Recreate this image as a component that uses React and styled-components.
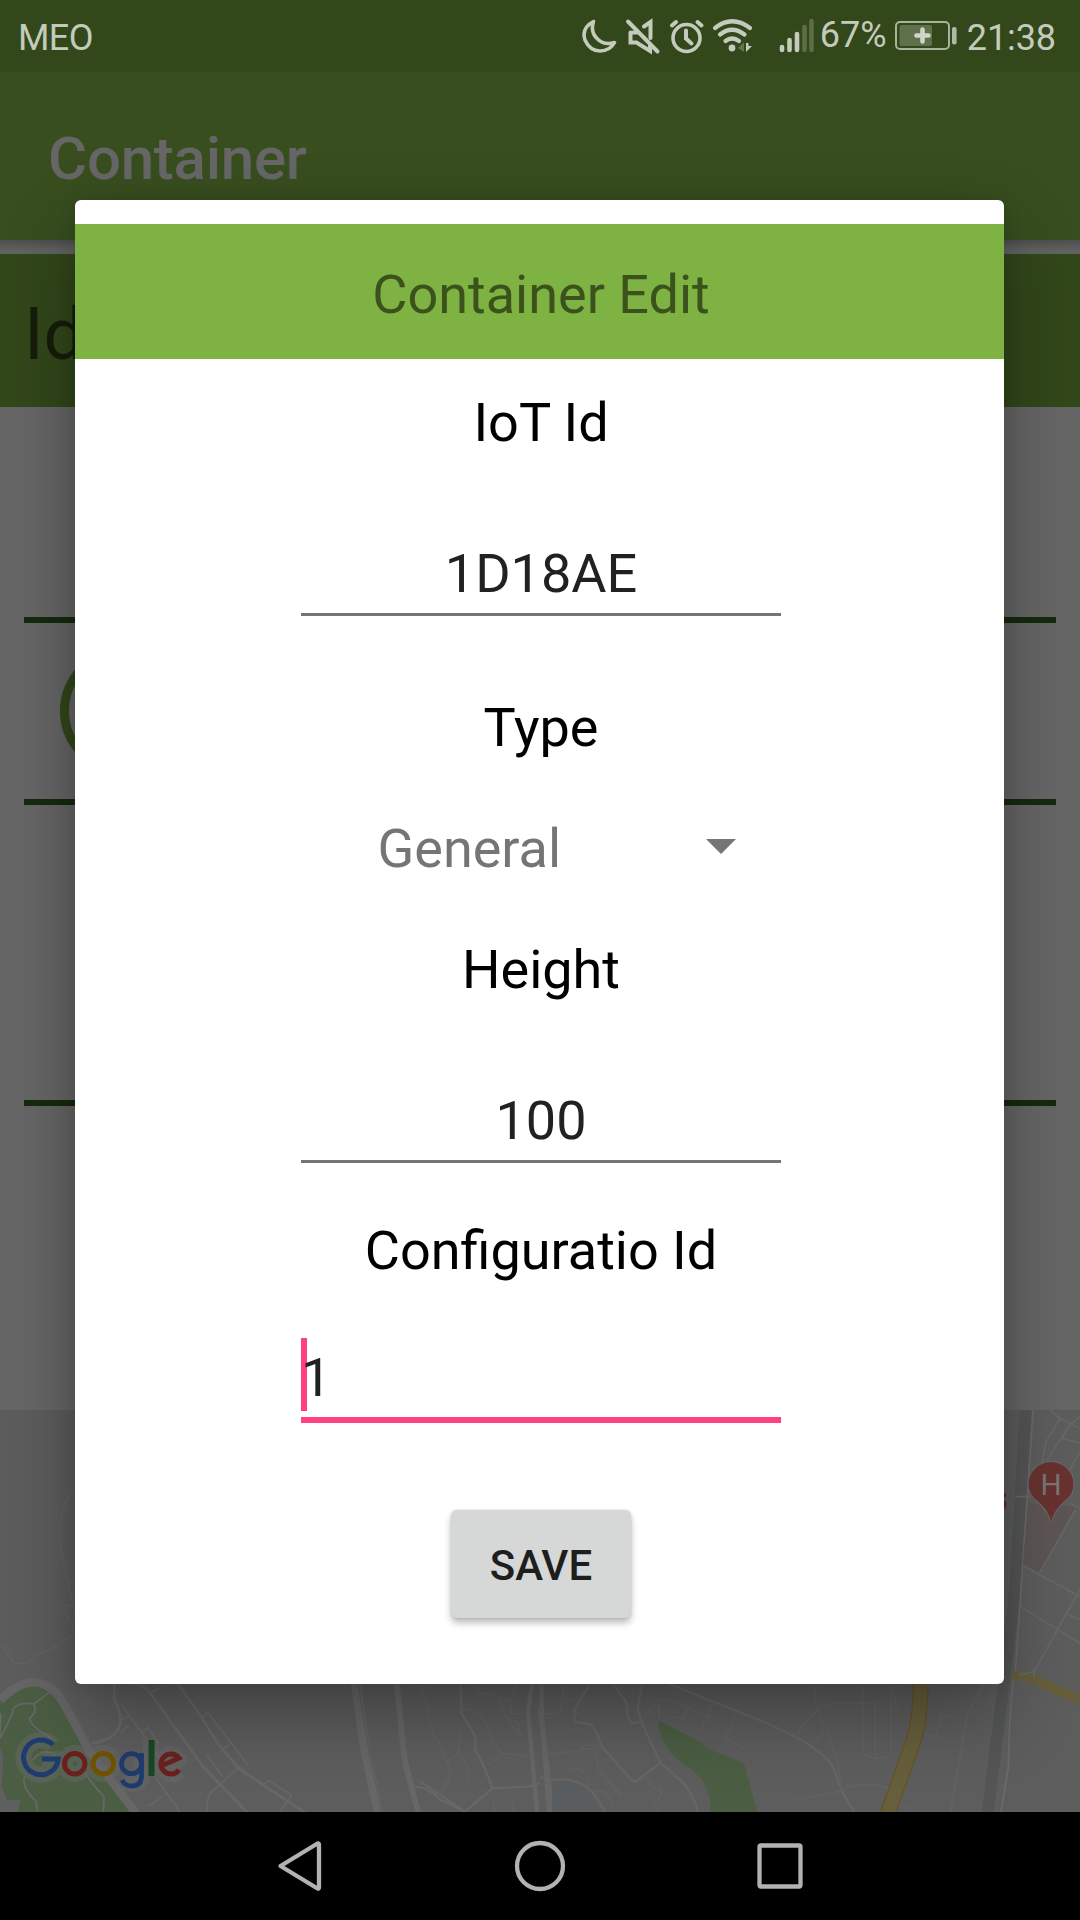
import React from "react";
import styled, { createGlobalStyle } from "styled-components";

const Global = createGlobalStyle`
  * { box-sizing: border-box; }
  html, body { margin: 0; background: #000; }
  body { font-family: Roboto, "Noto Sans", sans-serif; }
`;

const Screen = styled.div`
  position: relative;
  display: flex;
  flex-direction: column;
  width: 1080px;
  height: 1920px;
  overflow: hidden;
  background: #666;
`;

const StatusBar = styled.header`
  display: flex;
  justify-content: space-between;
  height: 72px;
  padding: 0 24px 0 18px;
  background: #32471a;
  color: #c4cbbc;
  font-size: 36px;
  line-height: 76px;
`;

const Carrier = styled.span`
  letter-spacing: -0.6px;
`;

const Clock = styled.span`
  letter-spacing: -0.1px;
`;

const StatusGroup = styled.div`
  display: flex;
`;

const Percent = styled.span`
  line-height: 71px;
  width: 67px;
  margin-right: 7px;
`;

const StatusSvg = styled.svg`
  display: block;
  flex: none;
`;

const AppBar = styled.div`
  height: 168px;
  flex: none;
  padding: 51px 48px 0;
  background: #384e1f;
  color: #666;
  font-size: 60px;
  font-weight: 500;
  letter-spacing: -0.25px;
  line-height: 72px;
`;

const AppBarShadow = styled.div`
  flex: none;
  height: 14px;
  background: linear-gradient(#4e4e4e, #616161 70%, #636363);
`;

const TitleBand = styled.div`
  flex: none;
  height: 153px;
  padding: 39px 24px 0;
  background: #32471a;
  color: #151d0b;
  font-size: 72px;
  line-height: 84px;
`;

const Details = styled.div`
  flex: none;
  display: flex;
  flex-direction: column;
  height: 1003px;
  padding: 210px 24px 0;
`;

const Rule = styled.div`
  height: 6px;
  background: #162a0e;
`;

const GaugeRow = styled.div`
  height: 176px;
  padding: 24px 36px;
`;

const Gauge = styled.div`
  width: 128px;
  height: 128px;
  border: 9px solid #32471a;
  border-radius: 50%;
`;

const Gap = styled.div`
  height: 295px;
`;

const MapArea = styled.div`
  position: relative;
  flex: none;
  height: 402px;
  background: #5d5d5d;
  svg { display: block; }
`;

const Dialog = styled.section`
  position: absolute;
  left: 75px;
  top: 200px;
  width: 929px;
  height: 1484px;
  padding-top: 24px;
  background: #fff;
  border-radius: 6px;
  box-shadow: 0 30px 72px rgba(0, 0, 0, 0.32), 0 0 18px rgba(0, 0, 0, 0.1);
  color: #000;
  font-size: 54px;
  line-height: 64px;
`;

const DialogTitle = styled.div`
  height: 135px;
  padding: 39px 0 0 3px;
  background: #7eb343;
  color: #3b521d;
  text-align: center;
`;

const Form = styled.div`
  display: flex;
  flex-direction: column;
  align-items: center;
  padding-left: 3px;
`;

const Label = styled.div`
  height: 64px;
  margin-top: ${(p) => p.$top}px;
`;

const Field = styled.div`
  display: flex;
  justify-content: ${(p) => (p.$focused ? "flex-start" : "center")};
  width: 480px;
  height: ${(p) => (p.$focused ? 85 : 74)}px;
  margin-top: ${(p) => p.$top}px;
  padding-top: ${(p) => (p.$focused ? 8 : 0)}px;
  border-bottom: ${(p) => (p.$focused ? "6px solid #ff4081" : "3px solid #757575")};
  color: #212121;
`;

const Caret = styled.span`
  width: 6px;
  height: 73px;
  margin: -8px -6px 0 0;
  background: #ff4081;
`;

const FieldText = styled.span`
  position: relative;
`;

const Spinner = styled.div`
  display: flex;
  align-items: center;
  justify-content: space-between;
  width: 358px;
  height: 64px;
  margin: 57px 0 0 31px;
  color: #757575;

  svg { margin-bottom: 6px; }
`;

const SaveButton = styled.button`
  width: 180px;
  height: 108px;
  margin-top: 87px;
  padding: 4px 0 0;
  border: 0;
  border-radius: 6px;
  background: #d6d7d7;
  box-shadow: 0 5px 7px rgba(0, 0, 0, 0.26), 0 0 3px rgba(0, 0, 0, 0.12);
  color: #1e1e1e;
  font: 500 42px/50px Roboto, sans-serif;
`;

const NavBar = styled.nav`
  display: flex;
  height: 108px;
  background: #000;
`;

function StatusIcons() {
  return (
    <StatusSvg width="240" height="72" viewBox="580 0 240 72" fill="none" stroke="#c4cbbc" strokeLinecap="round">
      <path d="M593.5 21.500Q581 28 585 40Q590 51 600 51Q610 51 614.500 42.500Q604 45.500 597.500 39Q590 32 593.500 21.500Z" strokeWidth="3.600" strokeLinejoin="round" />
      <path d="M628 21.500L657.500 51.500M630.500 32.500V42.500H636.500L650 51V44M633 32.500H638M644 26.500L650.500 22V38" strokeWidth="4" />
      <circle cx="686.500" cy="38" r="13.500" strokeWidth="3.600" />
      <path d="M686 30.500V38.500L691.500 43.500" strokeWidth="4" />
      <path d="M672 25.500L676 22M697.500 22L701.500 25.500" strokeWidth="4" />
      <path d="M715 28Q732 14.500 750 28M720 34.500Q732 25 744.500 34.500M725.500 41Q732 36 739 41" strokeWidth="4.200" />
      <circle cx="732" cy="48" r="3.400" fill="#c4cbbc" stroke="none" />
      <path d="M738 48L744 42V52Z" fill="#60734d" stroke="none" />
      <path d="M746 43V52L752 46H748.500V43Z" fill="#c4cbbc" stroke="none" />
      <path d="M782 50V47M789.500 50V40M797 50V34" strokeWidth="4.600" />
      <path d="M804.500 50V27M811.500 50V21" stroke="#5c6e48" strokeWidth="4.600" />
    </StatusSvg>
  );
}

function Battery() {
  return (
    <StatusSvg width="73" height="72" viewBox="894 0 73 72">
      <rect x="896" y="22" width="53" height="27" rx="4" fill="none" stroke="#a9b39c" strokeWidth="2" />
      <rect x="899.500" y="25" width="32.500" height="21" rx="2" fill="#5f704b" />
      <path d="M922.500 29.500V41.500M916.500 35.500H928.500" stroke="#d0d5ca" strokeWidth="4.600" strokeLinecap="round" />
      <rect x="952" y="27" width="4.600" height="17.500" rx="2" fill="#b0b9a5" />
    </StatusSvg>
  );
}

function CityMap() {
  return (
    <svg width="1080" height="402" viewBox="0 0 1080 402">
      <g transform="translate(0 -20) scale(.34438 .33333)" fill="none" stroke="#676767" strokeWidth="5">
        <path d="M0 935Q90 840 160 915Q185 945 270 1110L395 1270H0Z" fill="#4b5e43" stroke="none" />
        <path d="M0 1070L10 1100L5 1190L20 1230H60L50 1270H0Z" fill="#5f5f5f" stroke="none" />
        <path d="M0 930Q95 835 165 910Q185 935 260 1085L395 1270" stroke="#666" strokeWidth="25" />
        <path d="M0 1045Q30 990 40 955Q55 935 98 942L150 902M98 942Q110 965 85 985Q90 1010 150 1045M0 1040L2 970M72 1160Q60 1190 105 1235L110 1270M245 1145Q265 1180 302 1220L300 1270M95 1110Q120 1075 155 1090L175 1130" />
        <path d="M218 288Q150 380 185 520L218 670M203 580L220 575M218 640L185 650Q187 675 210 700V735Q150 785 105 793Q80 830 40 818Q20 790 10 773L0 771" stroke="#626262" />
        <path d="M332 880V930Q360 980 345 1015Q320 1055 265 1060M375 880Q415 880 435 908L590 1130L720 1270M515 880L585 980Q615 1035 640 1070L690 1130L770 1190L890 1270" strokeWidth="8" />
        <path d="M435 910L465 893M350 990L370 980M355 947L440 1070L510 1180M375 1005L350 1030M410 1030L430 1012L460 1060M590 980L603 968L720 1125M600 1095L647 1160M640 1085L665 1065M720 1160L690 1135L610 1210Q600 1230 600 1270M760 1190L780 1172L847 1215L810 1270M450 1160L525 1270M430 1250L470 1220" />
        <path d="M1033 880L1060 1080L1100 1270" strokeWidth="28" />
        <path d="M1040 880L1072 1090L1110 1270" stroke="#5b5b5b" strokeWidth="3" />
        <path d="M1152 880L1175 1110L1215 1270" strokeWidth="17" />
        <path d="M1545 880L1533 965L1560 1270M1573 880Q1570 980 1595 1270" strokeWidth="12" />
        <path d="M1338 880L1340 970Q1370 1020 1380 1040V1080Q1405 1120 1430 1195L1350 1265L1220 1175M1430 1195L1530 1190L1568 1180M1205 1190Q1240 1190 1280 1230L1350 1265" strokeWidth="7" />
        <path d="M1205 880Q1230 915 1240 940Q1245 1020 1275 1060L1300 1120Q1320 1160 1275 1215M1235 880L1222 910M1340 955Q1395 955 1415 1010Q1430 1060 1460 1090L1540 1100M1340 1000L1330 1090L1300 1118M1390 880L1388 905L1485 935L1500 880M1385 935L1390 905M1450 925Q1460 980 1510 1035L1505 1000L1465 980M1480 935L1485 970L1545 975M1330 1085L1360 1130V1170M1418 1125L1460 1090M1430 1230L1440 1270M1490 1230V1270" stroke="#626262" />
      </g>
      <g transform="translate(540 -20) scale(.34438 .33333)" fill="none" stroke="#666" strokeWidth="5">
        <path d="M343 990L445 1045L475 1060V1070L592 1120L632 1270H494V1230Q480 1160 420 1125L380 1090Q350 1045 343 1010Z" fill="#4b5e43" stroke="none" />
        <path d="M36 1195Q60 1165 110 1180Q155 1200 188 1270H36Z" fill="#5a5d60" stroke="none" />
        <path d="M0 950L28 1200V1270" strokeWidth="14" />
        <path d="M0 1160L30 1170Q110 1160 150 1205Q170 1230 190 1270M145 880L100 960V995L145 1003Q165 1020 180 1070L265 1170Q275 1180 290 1165L350 1118M210 880L250 935Q255 1000 270 1000L295 995M298 880L283 955L300 1010L350 1118L390 1155Q440 1190 460 1270M370 880L600 975Q650 995 720 1030Q820 1080 850 1130L880 1210L915 1270" strokeWidth="7" />
        <path d="M70 880L60 965Q40 975 15 970M60 925L110 930M120 1085V1070L175 1060M90 1020L115 1015M125 985L100 965M0 1095L100 1085L175 1070M160 1070L170 1140L240 1220M85 1140Q140 1130 140 1190M155 1205Q195 1190 210 1250M305 1155L330 1195Q360 1180 350 1220L340 1230M325 1235L345 1270M425 1215L450 1240M300 985Q330 960 345 930L375 930L520 990M430 955L415 985L375 980M500 940L470 1015L505 1050M570 965L538 1045L590 1075M345 985V945M800 880L800 945Q830 1010 855 1090Q870 1130 875 1200M740 1050Q780 960 850 940H973V1105M937 880V1090Q980 1120 1020 1090V895L1055 885M1020 895L1040 960M825 1020L790 1065M740 1230L865 1205Q930 1165 1025 1200M1025 1235L1085 1260M1110 1030L1150 1040L1165 975L1200 980M1290 880L1240 975L1192 1270" stroke="#626262" />
        <path d="M1105 880Q1105 1010 1075 1080L1010 1270" stroke="#655320" strokeWidth="46" />
        <path d="M1105 880Q1105 1010 1075 1080L1010 1270" stroke="#675f3b" strokeWidth="40" />
        <path d="M1410 60L1380 600L1300 1270" stroke="#535556" strokeWidth="34" />
        <path d="M1432 60L1380 850Q1365 900 1360 1130L1338 1270" stroke="#6a6a6a" />
        <path d="M1418 340L1555 350L1450 550L1402 520Z" fill="#5d5654" stroke="none" />
        <path d="M1370 856L1420 862L1568 930" stroke="#675f3b" strokeWidth="28" />
        <path d="M1480 60L1510 85L1470 155L1455 230M1535 110L1470 215M1510 85L1568 115M1535 110L1518 145L1568 160M1568 80L1535 110M1380 320H1425M1400 525L1568 620M1395 650L1568 760M1568 600L1505 715L1435 845L1390 855M1535 675L1568 690M1555 360L1450 550M1540 340L1568 355M1568 185L1535 245M1435 835V860" stroke="#676767" />
        <path d="M1484 395Q1478 362 1445 333Q1419 314 1419 282A65 66 0 0 1 1549 282Q1549 314 1523 333Q1491 362 1484 395Z" fill="#683230" stroke="#666" strokeWidth="7" paintOrder="stroke" />
        <text x="1484" y="314" textAnchor="middle" fontSize="86" fill="#777" stroke="none" fontFamily="Roboto">H</text>
        <path d="M1345 310Q1355 315 1347 322M1345 332Q1356 340 1347 355" stroke="#612923" strokeWidth="6" />
      </g>
      <g fill="none" strokeLinecap="butt">
        <g stroke="#686868" strokeOpacity=".5" strokeWidth="16" strokeLinejoin="round">
          <path d="M53 334.800A17.400 17.400 0 1 0 58.300 349H42M75 343A10.500 10.500 0 1 0 75 364A10.500 10.500 0 1 0 75 343M103 343A10.500 10.500 0 1 0 103 364A10.500 10.500 0 1 0 103 343M142 343V367Q139 378 124 372M151 330V366M180 361Q165 372 162 353Q167 336 180 350L161 357" />
        </g>
        <path d="M53 334.800A17.400 17.400 0 1 0 58.300 349H42" stroke="#1f3c70" strokeWidth="5" />
        <circle cx="74.700" cy="353.700" r="10.200" stroke="#6b211d" strokeWidth="5" />
        <circle cx="103.300" cy="353.700" r="10.200" stroke="#715300" strokeWidth="5" />
        <circle cx="131.500" cy="353.700" r="10" stroke="#1f3c70" strokeWidth="4.800" />
        <path d="M141.500 343V367Q141 376 131.500 376Q125 376 122 370" stroke="#1f3c70" strokeWidth="4.800" />
        <path d="M151.500 330V366" stroke="#1a4724" strokeWidth="6" />
        <path d="M179 360A10 10 0 1 1 179 348L161 356" stroke="#6b211d" strokeWidth="5" />
      </g>
    </svg>
  );
}

export default function App() {
  return (
    <Screen>
      <Global />
      <StatusBar>
        <Carrier>MEO</Carrier>
        <StatusGroup>
          <StatusIcons />
          <Percent>67%</Percent>
          <Battery />
          <Clock>21:38</Clock>
        </StatusGroup>
      </StatusBar>
      <AppBar>Container</AppBar>
      <AppBarShadow />
      <TitleBand>Id</TitleBand>
      <Details>
        <Rule />
        <GaugeRow>
          <Gauge />
        </GaugeRow>
        <Rule />
        <Gap />
        <Rule />
      </Details>
      <MapArea>
        <CityMap />
      </MapArea>
      <NavBar>
        <svg width="1080" height="108" viewBox="0 0 1080 108" fill="none" stroke="#b2b2b2" strokeWidth="4.300" strokeLinejoin="round">
          <path d="M280.500 54L317.500 31.500Q319 31 319 33V75Q319 77 317.500 76.500Z" />
          <circle cx="540" cy="54" r="23" />
          <rect x="759.500" y="33.500" width="41" height="41" rx="1.500" />
        </svg>
      </NavBar>
      <Dialog>
        <DialogTitle>Container Edit</DialogTitle>
        <Form>
          <Label $top={32}>IoT Id</Label>
          <Field $top={87}>1D18AE</Field>
          <Label $top={80}>Type</Label>
          <Spinner>
            <span>General</span>
            <svg width="30" height="15" viewBox="0 0 30 15"><path d="M0 0H30L15 15Z" fill="#757575" /></svg>
          </Spinner>
          <Label $top={57}>Height</Label>
          <Field $top={87}>100</Field>
          <Label $top={56}>Configuratio Id</Label>
          <Field $top={55} $focused>
            <Caret />
            <FieldText>1</FieldText>
          </Field>
          <SaveButton>SAVE</SaveButton>
        </Form>
      </Dialog>
    </Screen>
  );
}
